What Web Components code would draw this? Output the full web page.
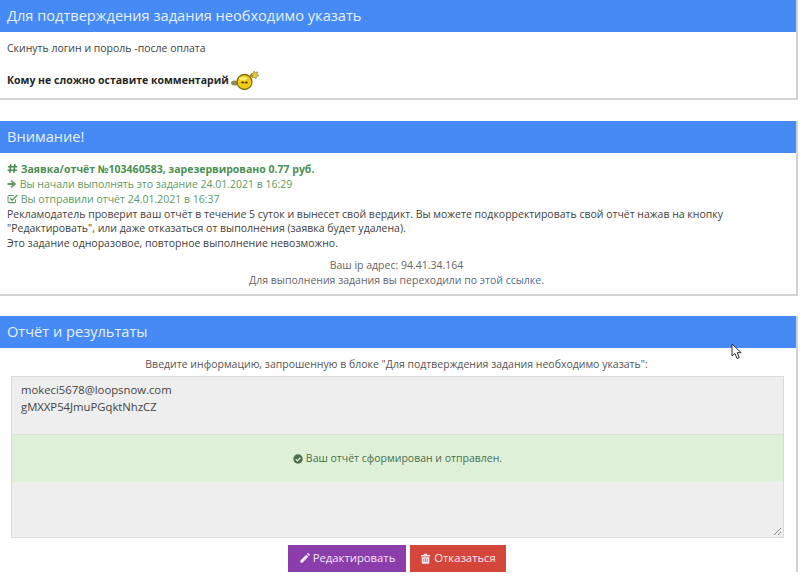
<!DOCTYPE html>
<html lang="ru"><head><meta charset="utf-8"><title>Отчёт</title>
<style>
html,body{margin:0;padding:0;background:#fff;}
body{width:807px;height:576px;overflow:hidden;position:relative;font:10.5px/14.6px "Open Sans",sans-serif;color:#3f3f3f;}
x-panel{margin-bottom:21px}
</style></head><body>
<template id="panel-t"><style>
:host{display:block;width:798px;box-sizing:border-box;border-right:2px solid #cfd2d4;border-bottom:2px solid #d0d2d3;background:#fff;}
header{height:32px;background:#468af5;color:#e6f0fd;font-size:14.6px;line-height:30px;padding-left:7px;font-weight:400;box-sizing:border-box}
.b{padding:var(--pad,9px 7px 0);box-sizing:border-box}
</style><header><slot name="title"></slot></header><div class="b"><slot></slot></div></template>

<template id="icon-t"><style>:host{display:inline-block;vertical-align:-1px;line-height:0}svg{display:block}</style><svg id="s" viewBox="0 0 16 16" fill="none"></svg></template>

<template id="alert-t"><style>:host{display:flex;align-items:center;justify-content:center;gap:3px;height:48px;background:#dff0d8;color:#4a6f4c;font-size:10.5px;border-top:1px solid #d9e6d3;box-sizing:border-box}</style><slot></slot></template>

<template id="report-t"><style>
:host{display:block;margin:0 11px;width:773px;box-sizing:border-box;height:162px;background:#eee;border:1px solid #dcdcdc;position:relative;color:#444;font-size:11.3px;line-height:17px}
.top{height:57px;padding:4px 9px;box-sizing:border-box}
.grip{position:absolute;right:1px;bottom:1px}
</style><div class="top"><slot name="text"></slot></div><slot></slot>
<svg class="grip" width="9" height="9" viewBox="0 0 9 9"><path d="M1 8 8 1M5 8 8 5" stroke="#8a8a8a" fill="none"/></svg></template>

<template id="btn-t"><style>
:host{display:inline-flex;align-items:center;justify-content:center;gap:3px;height:27px;box-sizing:border-box;color:#f3e6f5;font-size:11.3px;background:var(--bg);width:var(--w)}
</style><slot></slot></template>

<template id="smiley-t"><style>:host{display:inline-block;vertical-align:-7px;line-height:0;margin-left:1px}</style>
<svg width="29" height="21" viewBox="0 0 29 21">
<ellipse cx="4.500" cy="13" rx="3.500" ry="2.500" fill="#8f8a55"/>
<circle cx="14.500" cy="12" r="7.500" fill="#efcb12" stroke="#7f7116" stroke-width="1.300"/>
<ellipse cx="13" cy="8.500" rx="4" ry="2" fill="#fbe96a"/>
<path d="M11 12.500c1-1.500 2.500-1.500 3.500 0 1-1.500 2.500-1.500 3.500 0-1 1.500-2.500 1-3.500 0-1 1-2.500 1.500-3.500 0Z" fill="#4a3d08"/>
<path d="M20 6 24 4.500" stroke="#9b8a22" stroke-width="2.500"/>
<path d="M24 1l1.200 2 2.300-1.200-.6 2.600 2 1.300-2.600.8-.3 2.300-2-1.700-2.200.7.800-2.400-1.500-1.900 2.500-.2Z" fill="#e6cc42" stroke="#80721c" stroke-width=".6"/>
</svg></template>

<template id="cursor-t"><style>:host{position:absolute;left:731px;top:343px;line-height:0}</style>
<svg width="12" height="17" viewBox="0 0 12 17"><path d="M1 1v12l3-2.500 2 5 2.200-1-2-4.800h4Z" fill="#fff" stroke="#2a2f38" stroke-width="1"/></svg></template>

<x-panel>
  <span slot="title">Для подтверждения задания необходимо указать</span>
  <div style="height:57px">
    <div>Скинуть логин и пороль -после оплата</div>
    <div style="margin-top:14px;font-weight:700;color:#262626;white-space:nowrap;height:21px;line-height:17px">Кому не сложно оставите комментарий<x-smiley></x-smiley></div>
  </div>
</x-panel>

<x-panel style="margin-bottom:20px">
  <span slot="title">Внимание!</span>
  <div style="height:132px">
    <div style="color:#4b8f52;font-weight:700"><x-icon name="hash" size="11"></x-icon> Заявка/отчёт №103460583, зарезервировано 0.77 руб.</div>
    <div style="color:#5d9a62;line-height:15px"><x-icon name="arrow" size="10"></x-icon> Вы начали выполнять это задание 24.01.2021 в 16:29</div>
    <div style="color:#5d9a62;line-height:15px"><x-icon name="checkbox" size="11"></x-icon> Вы отправили отчёт 24.01.2021 в 16:37</div>
    <div>Рекламодатель проверит ваш отчёт в течение 5 суток и вынесет свой вердикт. Вы можете подкорректировать свой отчёт нажав на кнопку<br>"Редактировать", или даже отказаться от выполнения (заявка будет удалена).<br>Это задание одноразовое, повторное выполнение невозможно.</div>
    <div style="text-align:center;margin-top:8px;color:#666;padding-right:3px;line-height:15px">Ваш ip адрес: 94.41.34.164<br>Для выполнения задания вы переходили по <span style="color:#46739a">этой ссылке</span>.</div>
  </div>
</x-panel>

<x-panel style="--pad:9px 0 0;border-bottom:0">
  <span slot="title">Отчёт и результаты</span>
  <div style="text-align:center;color:#555;height:19px;padding-right:3px">Введите информацию, запрошенную в блоке "Для подтверждения задания необходимо указать":</div>
  <x-report>
    <div slot="text"><div>mokeci5678@loopsnow.com</div><div>gMXXP54JmuPGqktNhzCZ</div></div>
    <x-alert><x-icon name="ok" size="10"></x-icon> Ваш отчёт сформирован и отправлен.</x-alert>
  </x-report>
  <div style="display:flex;justify-content:center;gap:4px;margin-top:7px;padding-right:2px">
    <x-btn style="--bg:#8a3dab;--w:118px"><x-icon name="pencil" size="11"></x-icon>Редактировать</x-btn>
    <x-btn style="--bg:#d5463a;--w:96px"><x-icon name="trash" size="11"></x-icon>Отказаться</x-btn>
  </div>
</x-panel>
<x-cursor></x-cursor>

<script>
const ICONS={
 hash:'<path d="M5.500 1.500 4 14.500M11.500 1.500 10 14.500M1.500 5.500H15M1 10.500h13.500" stroke="currentColor" stroke-width="2.400"/>',
 arrow:'<path d="M1 6.500h7.500L5.500 3.500 7.500 1.500 14.500 8l-7 6.500-2-2 3-3H1Z" fill="currentColor"/>',
 checkbox:'<path d="M12.500 9v3.500a1.500 1.500 0 0 1-1.500 1.500H3a1.500 1.500 0 0 1-1.500-1.500V5A1.500 1.500 0 0 1 3 3.500h7" stroke="currentColor" stroke-width="1.500"/><path d="M4.500 7.500 7.500 10.500 15 3" stroke="currentColor" stroke-width="2.200"/>',
 ok:'<circle cx="8" cy="8" r="7.500" fill="currentColor"/><path d="M4.200 8.200 7 11l4.800-5" stroke="#dff0d8" stroke-width="2.200"/>',
 pencil:'<path d="M10.500 2.500 13.500 5.500 5 14H2v-3ZM11.500 1.500l1-1a1 1 0 0 1 1.400 0l1.600 1.600a1 1 0 0 1 0 1.400l-1 1Z" fill="currentColor"/>',
 trash:'<path d="M6 1h4l1 2h3.500v2h-13V3H5ZM2.500 6h11v8.500a1 1 0 0 1-1 1h-9a1 1 0 0 1-1-1Z" fill="currentColor"/><path d="M5.500 8v5M8 8v5M10.500 8v5" stroke="#d5463a" stroke-width="1"/>'
};
function simple(name,tid,after){
  customElements.define(name,class extends HTMLElement{
    constructor(){super();const r=this.attachShadow({mode:'open'});r.appendChild(document.getElementById(tid).content.cloneNode(true));}
    connectedCallback(){after&&after(this);}
  });
}
simple('x-panel','panel-t');
simple('x-alert','alert-t');
simple('x-report','report-t');
simple('x-btn','btn-t');
simple('x-smiley','smiley-t');
simple('x-cursor','cursor-t');
simple('x-icon','icon-t',el=>{
  const s=el.shadowRoot.getElementById('s'),z=el.getAttribute('size')||10;
  s.setAttribute('width',z);s.setAttribute('height',z);
  s.innerHTML=ICONS[el.getAttribute('name')]||'';
});
</script>
</body></html>
